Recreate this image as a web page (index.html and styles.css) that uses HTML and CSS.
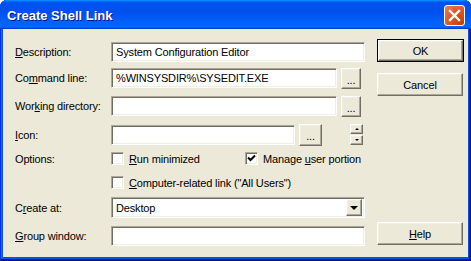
FILE: index.html
```html
<!DOCTYPE html>
<html lang="en">
<head>
    <meta charset="UTF-8">
    <title>Create Shell Link</title>
    <link rel="stylesheet" href="styles.css">
</head>
<body>

    <div class="window">
        <!-- Title bar -->
        <div class="titlebar">
            <span class="title">Create Shell Link</span>
            <button class="close-btn">
                <svg width="13" height="13" viewBox="0 0 13 13">
                    <path d="M2 2 L11 11 M11 2 L2 11" stroke="#fff" stroke-width="2.4" stroke-linecap="square"/>
                </svg>
            </button>
        </div>

        <div class="client">
            <div class="form">
                <div class="row row-desc">
                    <span class="label"><u>D</u>escription:</span>
                    <div class="edit full">System Configuration Editor</div>
                </div>

                <div class="row row-cmd">
                    <span class="label">Co<u>m</u>mand line:</span>
                    <div class="edit short">%WINSYSDIR%\SYSEDIT.EXE</div>
                    <button class="btn browse">...</button>
                </div>

                <div class="row row-dir">
                    <span class="label">Wor<u>k</u>ing directory:</span>
                    <div class="edit short"></div>
                    <button class="btn browse">...</button>
                </div>

                <div class="row row-icon">
                    <span class="label"><u>I</u>con:</span>
                    <div class="edit icon-edit"></div>
                    <button class="btn browse wide-browse">...</button>
                    <div class="spin">
                        <button class="btn spin-btn"><span class="arrow-up"></span></button>
                        <button class="btn spin-btn"><span class="arrow-down"></span></button>
                    </div>
                </div>

                <div class="row row-opt">
                    <span class="label">Options:</span>
                    <label class="check check-run"><span class="box"></span><span><u>R</u>un minimized</span></label>
                    <label class="check"><span class="box checked">
                        <svg width="9" height="9" viewBox="0 0 9 9"><path d="M1 3.5 L3.5 6 L8 1.5" stroke="#000" stroke-width="2" fill="none"/></svg>
                    </span><span>Manage <u>u</u>ser portion</span></label>
                </div>

                <div class="row row-all">
                    <span class="label"></span>
                    <label class="check"><span class="box"></span><span><u>C</u>omputer-related link ("All Users")</span></label>
                </div>

                <div class="row row-create">
                    <span class="label">C<u>r</u>eate at:</span>
                    <div class="edit full combo">
                        <span class="combo-text">Desktop</span>
                        <span class="btn combo-btn"><span class="arrow-down big"></span></span>
                    </div>
                </div>

                <div class="row row-group">
                    <span class="label"><u>G</u>roup window:</span>
                    <div class="edit full"></div>
                </div>
            </div>

            <div class="side">
                <button class="btn push default">OK</button>
                <button class="btn push cancel">Cancel</button>
                <button class="btn push help"><u>H</u>elp</button>
            </div>
        </div>
    </div>

</body>
</html>
```

FILE: styles.css
```css
/* Gaya Umum */
body {
    margin: 0;
    padding: 0;
    background: #fff;
    font-family: 'Liberation Sans', Arial, sans-serif;
    font-size: 11px;
    letter-spacing: -0.15px;
    color: #000;
}

button {
    font-family: inherit;
    font-size: inherit;
    letter-spacing: inherit;
    color: inherit;
    padding: 0;
    margin: 0;
}

/* Jendela */
.window {
    width: 471px;
    height: 261px;
    box-sizing: border-box;
    background: #0054e3;
    border-radius: 7px 7px 0 0;
    display: flex;
    flex-direction: column;
    box-shadow: inset -1px -1px #00138c, inset 1px 1px #0831d9, inset -2px -2px #001ea0, inset 2px 2px #166aee;
}

.titlebar {
    height: 29px;
    flex: none;
    display: flex;
    align-items: center;
    padding: 0 6px 0 7px;
    border-radius: 7px 7px 0 0;
    background: linear-gradient(180deg, #0997ff, #0053ee 8%, #0050ee 40%, #0066ff 88%, #0066ff 93%, #005bff 95%, #003dd7 96%, #003dd7);
}

.title {
    flex-grow: 1;
    color: #fff;
    font-weight: bold;
    font-size: 13px;
    letter-spacing: 0;
    text-shadow: 1px 1px #0f1089;
    padding-top: 1px;
}

.close-btn {
    width: 21px;
    height: 21px;
    border: 1px solid #fff;
    border-radius: 3px;
    background: radial-gradient(circle at 90% 90%, #c84000 0, #e0552a 55%, #e8845c 100%);
    display: flex;
    align-items: center;
    justify-content: center;
    margin-top: 1px;
}

.client {
    flex-grow: 1;
    margin: 0 3px 4px 3px;
    background: #ece9d8;
    display: flex;
    padding: 13px 0 0 12px;
}

/* Form */
.form {
    width: 350px;
}

.row {
    display: flex;
    align-items: center;
    height: 20px;
}

.row-cmd { margin-top: 6px; }
.row-dir { margin-top: 8px; }
.row-icon { margin-top: 8px; height: 21px; }
.row-opt { margin-top: 7px; height: 13px; }
.row-all { margin-top: 11px; height: 13px; }
.row-create { margin-top: 8px; height: 21px; }
.row-group { margin-top: 8px; }

.label {
    width: 96px;
    flex: none;
}

.edit {
    box-sizing: border-box;
    height: 20px;
    background: #fff;
    border: 1px solid;
    border-color: #aca899 #fff #fff #aca899;
    box-shadow: inset 1px 1px #716f64, inset -1px -1px #f1efe2;
    padding: 0 4px;
    line-height: 18px;
    white-space: nowrap;
}

.full { width: 254px; }
.short { width: 226px; }
.icon-edit { width: 184px; }

.btn {
    box-sizing: border-box;
    background: #ece9d8;
    border: 1px solid;
    border-color: #fff #716f64 #716f64 #fff;
    box-shadow: inset -1px -1px #aca899, inset 1px 1px #f1efe2;
    display: flex;
    align-items: center;
    justify-content: center;
}

.browse {
    width: 20px;
    height: 21px;
    margin-left: 4px;
    padding-top: 3px;
}

.wide-browse {
    width: 23px;
    height: 22px;
}

.spin {
    margin-left: 28px;
    display: flex;
    flex-direction: column;
    gap: 1px;
}

.spin-btn {
    width: 13px;
    height: 10px;
}

.arrow-up, .arrow-down {
    width: 0;
    height: 0;
    border-left: 2px solid transparent;
    border-right: 2px solid transparent;
}

.arrow-up { border-bottom: 2px solid #000; }
.arrow-down { border-top: 2px solid #000; }

.arrow-down.big {
    border-left-width: 4px;
    border-right-width: 4px;
    border-top-width: 4px;
}

/* Checkbox */
.check {
    display: flex;
    align-items: center;
    gap: 5px;
}

.check-run {
    width: 134px;
}

.box {
    box-sizing: border-box;
    width: 13px;
    height: 13px;
    background: #fff;
    border: 1px solid;
    border-color: #aca899 #fff #fff #aca899;
    box-shadow: inset 1px 1px #716f64, inset -1px -1px #f1efe2;
    display: flex;
    align-items: center;
    justify-content: center;
}

/* Combo */
.combo {
    display: flex;
    align-items: center;
    padding: 0 2px 0 4px;
    height: 21px;
}

.combo-text {
    flex-grow: 1;
}

.combo-btn {
    width: 16px;
    height: 17px;
}

/* Tombol samping */
.side {
    margin-left: 12px;
    display: flex;
    flex-direction: column;
}

.push {
    width: 86px;
    height: 23px;
}

.default {
    margin-top: -2px;
    outline: 1px solid #000;
    height: 21px;
    width: 85px;
    margin-left: 1px;
}

.cancel {
    margin-top: 12px;
}

.help {
    margin-top: 126px;
}
```
